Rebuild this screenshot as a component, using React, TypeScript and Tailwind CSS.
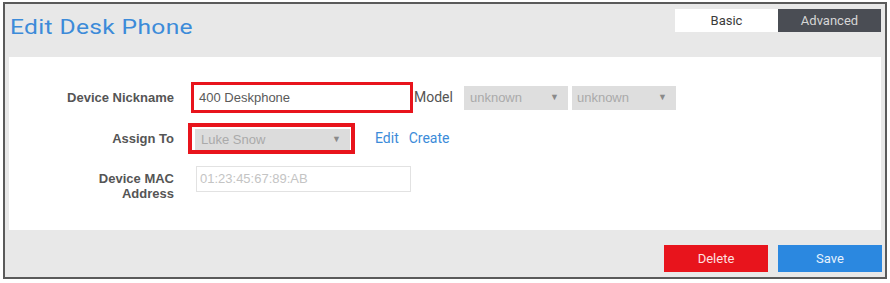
import React from "react";

const arial = { fontFamily: '"Liberation Sans", Arial, sans-serif' };
const roboto = { fontFamily: 'Roboto, "Liberation Sans", sans-serif' };

function Arrow() {
  return <span className="text-[9px] text-[#8a8a8a] leading-none">▼</span>;
}

export default function App() {
  return (
    <div className="w-[890px] h-[283px] bg-white pt-[2px] pl-[3px]">
      <div className="w-[884px] h-[277px] border-2 border-[#5a5a5a] bg-[#e8e8e8] flex flex-col px-[4px]">
        {/* header */}
        <div className="h-[53px] flex justify-between items-start shrink-0">
          <div
            className="mt-[11px] ml-[1px] text-[21px] leading-[24px] tracking-[0.3px] text-[#3c8bd9] scale-x-[1.17] origin-left"
            style={roboto}
          >
            Edit Desk Phone
          </div>
          <div className="flex mt-[5px] text-[13px]" style={roboto}>
            <div className="w-[103px] h-[23px] bg-white text-[#3a3a3a] flex items-center justify-center">
              Basic
            </div>
            <div className="w-[103px] h-[23px] bg-[#4a4d54] text-[#d6d6d6] flex items-center justify-center">
              Advanced
            </div>
          </div>
        </div>

        {/* panel */}
        <div className="bg-white h-[173px] shrink-0 pt-[25px] text-[13px]" style={arial}>
          {/* row 1 */}
          <div className="flex items-center h-[31px]">
            <div className="w-[165px] text-right font-bold text-[#555]">Device Nickname</div>
            <div className="ml-[17px] w-[222px] h-[31px] border-[3px] border-[#e8141c] bg-white flex items-center pl-[5px] text-[#5a5a5a]">
              400 Deskphone
            </div>
            <div className="ml-[1px] text-[14px] text-[#555]" style={roboto}>
              Model
            </div>
            <div className="ml-[11px] w-[104px] h-[24px] bg-[#dedede] flex items-center justify-between pl-[6px] pr-[9px] text-[#aaa]">
              <span>unknown</span>
              <Arrow />
            </div>
            <div className="ml-[4px] w-[104px] h-[24px] bg-[#dedede] flex items-center justify-between pl-[5px] pr-[9px] text-[#aaa]">
              <span>unknown</span>
              <Arrow />
            </div>
          </div>

          {/* row 2 */}
          <div className="flex items-center h-[31px] mt-[10px]">
            <div className="w-[165px] text-right font-bold text-[#555]">Assign To</div>
            <div className="ml-[14px] w-[167px] h-[31px] border-[4px] border-[#e8141c] bg-white pl-[3px] pt-[2px] pr-[1px]">
              <div className="h-full bg-[#dcdcdc] flex items-center justify-between pl-[6px] pr-[9px] text-[#aaa]">
                <span>Luke Snow</span>
                <Arrow />
              </div>
            </div>
            <div className="ml-[20px] flex gap-[10px] text-[14px] text-[#3c8bd9]" style={roboto}>
              <span>Edit</span>
              <span>Create</span>
            </div>
          </div>

          {/* row 3 */}
          <div className="flex items-start mt-[12px]">
            <div className="w-[165px] text-right font-bold text-[#555] leading-[15px] mt-[5px]">
              Device MAC
              <br />
              Address
            </div>
            <div className="ml-[22px] w-[215px] h-[26px] border border-[#e2e2e2] flex items-center pl-[3px] text-[#c4c4c4]">
              01:23:45:67:89:AB
            </div>
          </div>
        </div>

        {/* footer */}
        <div className="flex justify-end pt-[15px] gap-[10px] -mr-[1px] text-[13px]" style={roboto}>
          <button className="w-[104px] h-[27px] bg-[#e8141c] text-[#fde0e0] flex items-center justify-center">
            Delete
          </button>
          <button className="w-[104px] h-[27px] bg-[#2b88e0] text-[#e6f1fc] flex items-center justify-center">
            Save
          </button>
        </div>
      </div>
    </div>
  );
}
